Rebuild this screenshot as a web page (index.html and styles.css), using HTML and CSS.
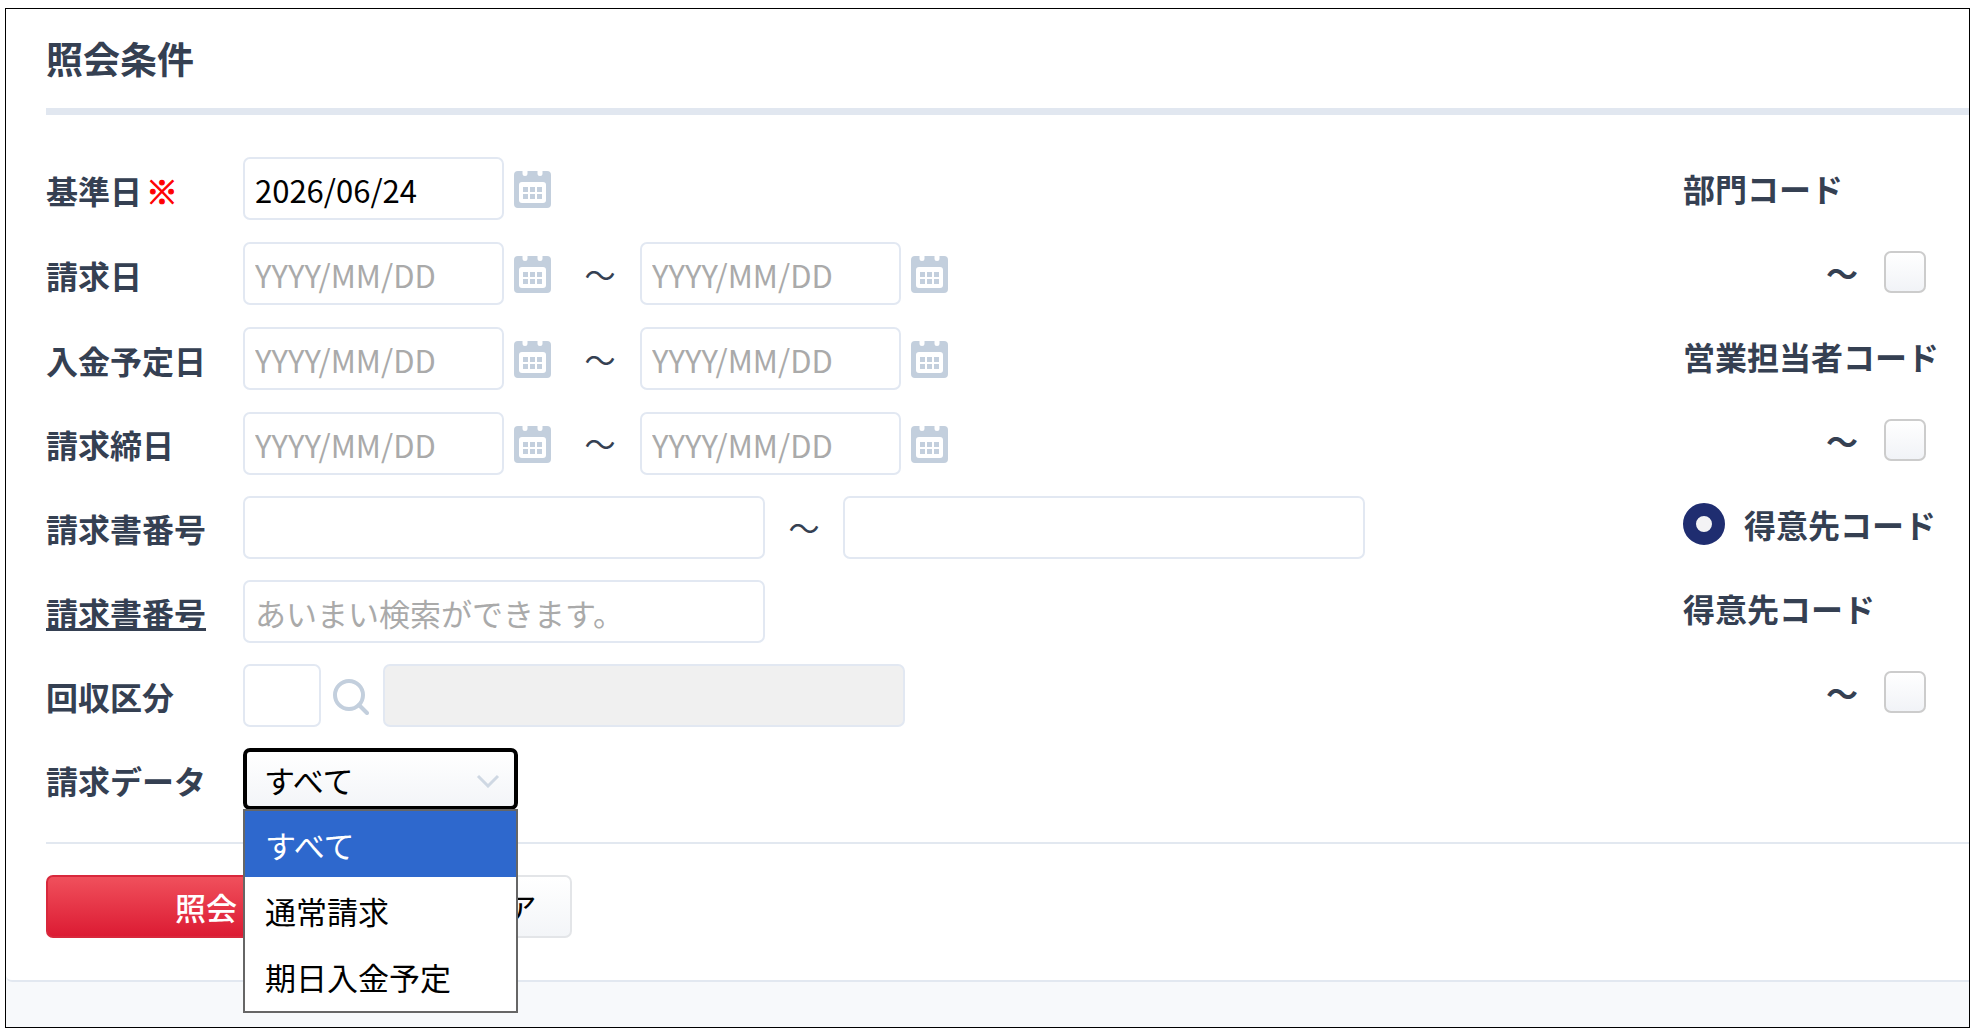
FILE: index.html
```html
<!DOCTYPE html>
<html lang="ja">
<head>
<meta charset="utf-8">
<meta name="viewport" content="width=device-width, initial-scale=1">
<title>照会条件</title>
<link rel="stylesheet" href="styles.css">
</head>
<body>
<svg class="sprite" aria-hidden="true">
  <symbol id="calendar" viewBox="0 0 37 37">
    <path fill="#c3cfdd" fill-rule="evenodd" d="M4 0H8.500V2.500A2.500 2.500 0 0 0 13.500 2.500V0H23.500V2.500A2.500 2.500 0 0 0 28.500 2.500V0H33A4 4 0 0 1 37 4V33A4 4 0 0 1 33 37H4A4 4 0 0 1 0 33V4A4 4 0 0 1 4 0ZM8 11A3 3 0 0 0 5 14V29A3 3 0 0 0 8 32H29A3 3 0 0 0 32 29V14A3 3 0 0 0 29 11Z"/>
    <path fill="#c3cfdd" d="M9 16h5v5H9zM16 16h5v5h-5zM23 16h5v5h-5zM9 23h5v5H9zM16 23h5v5h-5zM23 23h5v5h-5z"/>
  </symbol>
</svg>
<main class="frame">
  <form class="panel">
    <h1 class="title">照会条件</h1>
    <div class="columns">
      <div class="fields">
        <div class="row date-row">
          <label class="name" for="base">基準日<span class="required">※</span></label>
          <input class="box date" id="base" type="text" value="2026/06/24">
          <button class="icon" type="button" aria-label="カレンダー"><svg><use href="#calendar"/></svg></button>
        </div>
        <div class="row date-row">
          <label class="name" for="bill-from">請求日</label>
          <input class="box date" id="bill-from" type="text" placeholder="YYYY/MM/DD">
          <button class="icon" type="button" aria-label="カレンダー"><svg><use href="#calendar"/></svg></button>
          <span class="tilde">～</span>
          <input class="box date" type="text" placeholder="YYYY/MM/DD" aria-label="請求日 終了">
          <button class="icon" type="button" aria-label="カレンダー"><svg><use href="#calendar"/></svg></button>
        </div>
        <div class="row date-row">
          <label class="name" for="pay-from">入金予定日</label>
          <input class="box date" id="pay-from" type="text" placeholder="YYYY/MM/DD">
          <button class="icon" type="button" aria-label="カレンダー"><svg><use href="#calendar"/></svg></button>
          <span class="tilde">～</span>
          <input class="box date" type="text" placeholder="YYYY/MM/DD" aria-label="入金予定日 終了">
          <button class="icon" type="button" aria-label="カレンダー"><svg><use href="#calendar"/></svg></button>
        </div>
        <div class="row">
          <label class="name" for="close-from">請求締日</label>
          <input class="box date" id="close-from" type="text" placeholder="YYYY/MM/DD">
          <button class="icon" type="button" aria-label="カレンダー"><svg><use href="#calendar"/></svg></button>
          <span class="tilde">～</span>
          <input class="box date" type="text" placeholder="YYYY/MM/DD" aria-label="請求締日 終了">
          <button class="icon" type="button" aria-label="カレンダー"><svg><use href="#calendar"/></svg></button>
        </div>
        <div class="row">
          <label class="name" for="no-from">請求書番号</label>
          <input class="box long" id="no-from" type="text">
          <span class="tilde">～</span>
          <input class="box long" type="text" aria-label="請求書番号 終了">
        </div>
        <div class="row">
          <label class="name" for="no-like"><span class="underlined">請求書番号</span></label>
          <input class="box long" id="no-like" type="text" placeholder="あいまい検索ができます。">
        </div>
        <div class="row">
          <label class="name" for="kind">回収区分</label>
          <input class="box code" id="kind" type="text">
          <button class="icon search" type="button" aria-label="検索"><svg viewBox="0 0 37 37"><circle cx="17" cy="17" r="14" fill="none" stroke="#c3cfdd" stroke-width="4"/><path d="M27 27L35 35" stroke="#c3cfdd" stroke-width="4" stroke-linecap="round"/></svg></button>
          <input class="box long" type="text" disabled aria-label="回収区分名">
        </div>
        <div class="row">
          <label class="name" for="data">請求データ</label>
          <div class="dropdown">
            <select class="select" id="data">
              <option selected>すべて</option>
              <option>通常請求</option>
              <option>期日入金予定</option>
            </select>
            <svg class="chevron" viewBox="0 0 24 14"><path d="M2 2L12 12L22 2" fill="none" stroke="#cfd8e3" stroke-width="3"/></svg>
            <ul class="options" role="listbox">
              <li class="option selected" role="option" aria-selected="true">すべて</li>
              <li class="option" role="option">通常請求</li>
              <li class="option" role="option">期日入金予定</li>
            </ul>
          </div>
        </div>
      </div>
      <div class="codes">
        <div class="row"><label for="dept">部門コード</label></div>
        <div class="row range"><span>～</span><input class="check" id="dept" type="checkbox"></div>
        <div class="row"><label for="staff">営業担当者コード</label></div>
        <div class="row range"><span>～</span><input class="check" id="staff" type="checkbox"></div>
        <div class="row choice"><input class="radio" id="by-customer" type="radio" name="by" checked><label for="by-customer">得意先コード</label></div>
        <div class="row"><label for="customer">得意先コード</label></div>
        <div class="row range"><span>～</span><input class="check" id="customer" type="checkbox"></div>
      </div>
    </div>
    <div class="actions">
      <button class="button primary" type="submit">照会</button>
      <button class="button" type="reset">クリア</button>
    </div>
  </form>
</main>
</body>
</html>
```

FILE: styles.css
```css
* {
  box-sizing: border-box;
}

body {
  margin: 8px 5px 6px;
  background: #fff;
  color: #354052;
  font: 31px/46px "Noto Sans CJK JP", sans-serif;
}

input,
select,
button {
  margin: 0;
  font: inherit;
}

.sprite {
  position: absolute;
  width: 0;
  height: 0;
}

.frame {
  padding-bottom: 45px;
  border: 1px solid #000;
  background: #f7f9fb;
  box-shadow: 0 0 0 1px #d5d5d5;
}

.panel {
  padding-left: 40px;
  border-bottom: 2px solid #e2e8f0;
  border-radius: 0 0 0 6px;
  background: #fff;
}

.title {
  margin: 0;
  padding: 22px 0 23px;
  border-bottom: 7px solid #e1e7f0;
  font-size: 37px;
  line-height: 54px;
  font-weight: 700;
}

.columns {
  display: flex;
  justify-content: space-between;
  padding: 42px 0 32px;
  border-bottom: 2px solid #e2e8f0;
}

.fields,
.codes {
  display: flex;
  flex-direction: column;
  gap: 22px;
}

.codes {
  width: 286px;
  font-size: 32px;
  font-weight: 700;
  white-space: nowrap;
}

.row {
  display: flex;
  align-items: center;
  height: 62px;
}

.date-row {
  height: 63px;
}

.name {
  width: 197px;
  padding-top: 2px;
  font-size: 32px;
  font-weight: 700;
}

.required {
  margin-left: 4px;
  color: #f00;
  -webkit-text-stroke: 1px #f00;
}

.underlined {
  text-decoration: underline;
}

.box {
  height: 63px;
  padding: 2px 10px 0;
  border: 2px solid #e2e8f2;
  border-radius: 7px;
  background: #fff;
  color: #000;
}

.box::placeholder {
  color: #aaa;
  opacity: 1;
}

.box:disabled {
  background: #f0f0f0;
}

.date {
  width: 261px;
}

.long {
  width: 522px;
}

.code {
  width: 78px;
}

.icon {
  width: 37px;
  height: 39px;
  margin-left: 10px;
  padding: 2px 0 0;
  border: 0;
  background: none;
}

.icon svg {
  display: block;
  width: 37px;
  height: 37px;
}

.search {
  margin-left: 11px;
  margin-right: 14px;
}

.tilde {
  width: 78px;
  text-align: center;
}

.icon + .tilde {
  width: 89px;
  padding-left: 9px;
}

.dropdown {
  position: relative;
  width: 275px;
}

.select {
  display: block;
  width: 100%;
  height: 62px;
  padding: 2px 17px 0;
  border: 4px solid #000;
  border-radius: 7px;
  appearance: none;
  background: linear-gradient(#fff, #f3f5f8);
  color: #000;
}

.chevron {
  position: absolute;
  top: 26px;
  right: 18px;
  width: 24px;
  height: 14px;
}

.options {
  position: absolute;
  top: 61px;
  left: 0;
  z-index: 1;
  width: 100%;
  margin: 0;
  padding: 0 0 2px;
  border: 2px solid #666;
  background: #fff;
  color: #000;
  list-style: none;
}

.option {
  padding: 11px 20px 9px;
}

.selected {
  background: #2e68cd;
  color: #fff;
}

.range {
  justify-content: flex-end;
  gap: 26px;
  padding-right: 43px;
}

.choice {
  gap: 19px;
}

.check,
.radio {
  width: 42px;
  height: 42px;
  appearance: none;
}

.check {
  border: 2px solid #ccc;
  border-radius: 7px;
  background: linear-gradient(#fff, #f1f3f7);
}

.radio {
  border: 13px solid #1f2d70;
  border-radius: 50%;
  background: #f3f3f5;
}

.actions {
  display: flex;
  gap: 42px;
  padding: 31px 0 42px;
}

.button {
  width: 164px;
  height: 63px;
  padding: 0;
  border: 2px solid #e3e5e8;
  border-radius: 7px;
  background: linear-gradient(#fff, #f3f5f8);
  color: #000;
}

.primary {
  width: 320px;
  border-color: #d8283c;
  background: linear-gradient(#f0505c, #dc1b33);
  color: #fff;
  font-weight: 500;
}
```
